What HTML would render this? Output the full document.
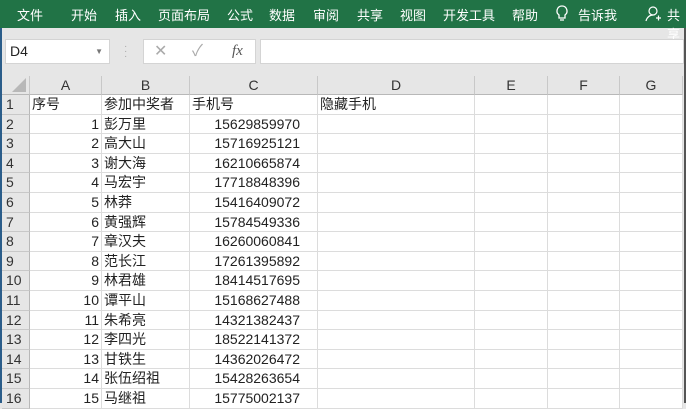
<!DOCTYPE html>
<html><head><meta charset="utf-8"><style>
*{margin:0;padding:0;box-sizing:border-box}
body{width:686px;height:403px;overflow:hidden;background:#e6e6e6;font-family:"Liberation Sans","Noto Sans CJK SC",sans-serif;position:relative}
.top{position:absolute;left:0;top:0;width:686px;height:28px;background:#217346;color:#fff;font-size:13px}
.top span{position:absolute;top:5px}
.lb{position:absolute;left:0;top:28px;width:2px;height:375px;background:#2b5d8a}
.rb{position:absolute;left:684px;top:28px;width:2px;height:375px;background:#555}
.box{position:absolute;background:#fff;border:1px solid #d4d4d4}
.grid{position:absolute;left:2px;top:76px}
.h{position:absolute;background:#e6e6e6;color:#333;font-size:14px;text-align:center;line-height:19px;border-right:1px solid #c8c8c8;border-bottom:1px solid #b8b8b8}
.c{position:absolute;background:#fff;border-right:1px solid #dcdcdc;border-bottom:1px solid #dcdcdc;font-size:14px;line-height:19px;color:#222;white-space:nowrap;overflow:hidden;padding:0 2px}
.r{position:absolute;background:#e6e6e6;border-bottom:1px solid #c8c8c8;border-right:1px solid #b8b8b8;font-size:14px;line-height:19px;color:#333;padding-left:4px}
</style></head><body>
<div class="top">
<span style="left:17px">文件</span><span style="left:71px">开始</span><span style="left:115px">插入</span><span style="left:158px">页面布局</span><span style="left:227px">公式</span><span style="left:269px">数据</span><span style="left:313px">审阅</span><span style="left:357px">共享</span><span style="left:400px">视图</span><span style="left:443px">开发工具</span><span style="left:512px">帮助</span>
<svg style="position:absolute;left:555px;top:4px" width="14" height="20" viewBox="0 0 14 20"><path d="M7 2a5 5 0 0 0-3 9v3h6v-3a5 5 0 0 0-3-9zM5 16h4" fill="none" stroke="#fff" stroke-width="1.3"/></svg>
<span style="left:578px">告诉我</span>
<svg style="position:absolute;left:645px;top:5px" width="16" height="18" viewBox="0 0 16 18"><circle cx="8" cy="6" r="4" fill="none" stroke="#fff" stroke-width="1.2"/><path d="M1 16c1-4 4-6 7-6M11 13h5M13.5 10.5v5" fill="none" stroke="#fff" stroke-width="1.2"/></svg>
<span style="left:667px">共享</span>
</div>
<div class="lb"></div><div class="rb"></div>
<div class="box" style="left:5px;top:39px;width:105px;height:25px;font-size:14px;line-height:23px;padding-left:4px;color:#222">D4<span style="position:absolute;right:6px;top:0;font-size:8px;color:#777">▼</span></div>
<div style="position:absolute;left:124px;top:44px;color:#aaa;font-size:10px;line-height:5px">·<br>·<br>·</div>
<div class="box" style="left:143px;top:39px;width:113px;height:25px;color:#aaa;font-size:16px;line-height:23px"><span style="position:absolute;left:10px">✕</span><span style="position:absolute;left:48px">✓</span><span style="position:absolute;left:88px;color:#555;font-family:'Liberation Serif',serif;font-style:italic;font-size:15px">fx</span></div>
<div class="box" style="left:260px;top:39px;width:424px;height:25px"></div>
<div class="grid" id="g"></div>
<script>
var g=document.getElementById('g');var cols=[28,72,88,128,157,73,72,63];var xs=[0];for(var i=0;i<cols.length;i++)xs.push(xs[i]+cols[i]);
var L=['','A','B','C','D','E','F','G'];var h='';
h+='<div class="h" style="left:0;top:0;width:28px;height:19px"><svg width="14" height="14" style="position:absolute;right:3px;bottom:2px"><path d="M14 0V14H0Z" fill="#b8b8b8"/></svg></div>';
for(i=1;i<8;i++)h+='<div class="h" style="left:'+xs[i]+'px;top:0;width:'+cols[i]+'px;height:19px">'+L[i]+'</div>';
var names=['彭万里','高大山','谢大海','马宏宇','林莽','黄强辉','章汉夫','范长江','林君雄','谭平山','朱希亮','李四光','甘铁生','张伍绍祖','马继祖'];
var ph=['15629859970','15716925121','16210665874','17718848396','15416409072','15784549336','16260060841','17261395892','18414517695','15168627488','14321382437','18522141372','14362026472','15428263654','15775002137'];
var rh=19.6;
for(var r=0;r<16;r++){var t=Math.round(19+r*rh);var hh=Math.round(19+(r+1)*rh)-t;var row=[];
if(r==0)row=['序号','参加中奖者','手机号','隐藏手机','','',''];else row=[String(r),names[r-1],ph[r-1],'','','',''];
h+='<div class="r" style="left:0;top:'+t+'px;width:28px;height:'+hh+'px">'+(r+1)+'</div>';
for(i=1;i<8;i++){var al='';if(r>0&&(i==1))al='text-align:right;';if(r>0&&i==3)al='text-align:right;padding-right:17px;';
h+='<div class="c" style="left:'+xs[i]+'px;top:'+t+'px;width:'+cols[i]+'px;height:'+hh+'px;'+al+'">'+row[i-1]+'</div>';}}
g.innerHTML=h;
</script>
</body></html>
